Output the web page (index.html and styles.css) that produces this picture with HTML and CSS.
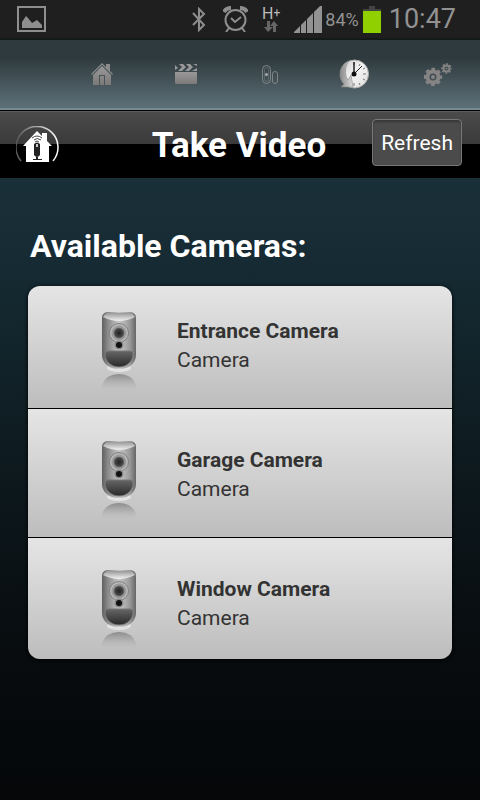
FILE: index.html
```html
<!DOCTYPE html>
<html lang="en">
    <head>
        <title>Take Video</title>
        <meta charset="UTF-8">
        <meta name="viewport" content="width=device-width, initial-scale=1">
        <link rel="stylesheet" href="styles.css">
    </head>
    <body>
        <!-- shared gradients and the camera drawing -->
        <svg class="defs" aria-hidden="true">
            <defs>
                <linearGradient id="body-metal">
                    <stop offset="0" stop-color="#606060"/>
                    <stop offset=".18" stop-color="#8c8c8c"/>
                    <stop offset=".5" stop-color="#c8c8c8"/>
                    <stop offset=".82" stop-color="#999"/>
                    <stop offset="1" stop-color="#666"/>
                </linearGradient>
                <linearGradient id="shine" x2="0" y2="1">
                    <stop offset="0" stop-color="#999"/>
                    <stop offset="1" stop-color="#f2f2f2"/>
                </linearGradient>
                <linearGradient id="sensor" x2="0" y2="1">
                    <stop offset="0" stop-color="#666"/>
                    <stop offset="1" stop-color="#292929"/>
                </linearGradient>
                <linearGradient id="mirror" x2="0" y2="1">
                    <stop offset="0" stop-color="#777" stop-opacity=".75"/>
                    <stop offset="1" stop-color="#aaa" stop-opacity="0"/>
                </linearGradient>
                <radialGradient id="lens">
                    <stop offset="0" stop-color="#222"/>
                    <stop offset=".7" stop-color="#444"/>
                    <stop offset="1" stop-color="#777"/>
                </radialGradient>
                <linearGradient id="grey" x2="0" y2="1">
                    <stop offset="0" stop-color="#999"/>
                    <stop offset="1" stop-color="#7c7978"/>
                </linearGradient>
                <linearGradient id="clock-face" x2="1" y2="1">
                    <stop offset="0" stop-color="#ccc"/>
                    <stop offset=".5" stop-color="#f4f4f4"/>
                    <stop offset="1" stop-color="#ddd"/>
                </linearGradient>
                <linearGradient id="clock-arrow">
                    <stop offset="0" stop-color="#888"/>
                    <stop offset="1" stop-color="#ddd"/>
                </linearGradient>
                <linearGradient id="ring">
                    <stop offset="0" stop-color="#555"/>
                    <stop offset="1" stop-color="#fff"/>
                </linearGradient>
            </defs>
            <symbol id="camera" viewBox="0 0 34 78">
                <ellipse cx="17" cy="56" rx="12" ry="4" fill="#eee" opacity=".7"/>
                <path d="M5 0H29Q34 1 34 6V43C34 51 27 57 17 57S0 51 0 43V6Q0 1 5 0Z" fill="url(#body-metal)"/>
                <path d="M5 1H29Q32 3 33 5Q25 9 17 9T1 5Q2 3 5 1Z" fill="url(#shine)"/>
                <circle cx="17" cy="21" r="9.5" fill="#b9b9b9" stroke="#808080"/>
                <circle cx="17" cy="21" r="7.5" fill="#9a9a9a"/>
                <circle cx="17" cy="21" r="5.5" fill="url(#lens)"/>
                <circle cx="17" cy="33" r="4.5" fill="#888"/>
                <circle cx="17" cy="33" r="3" fill="#111"/>
                <path d="M6 39H28Q31 39 31 42C31 49 25 55 17 55S3 49 3 42Q3 39 6 39Z" fill="url(#sensor)" stroke="#777"/>
                <path d="M0 78V73Q4 62 17 62T34 73V78Z" fill="url(#mirror)"/>
            </symbol>
        </svg>

        <div class="status">
            <svg class="picture" width="29" height="26" viewBox="0 0 29 26">
                <rect x="1" y="1" width="27" height="24" fill="none" stroke="#8e8e8e" stroke-width="2"/>
                <path d="M5 22V16L9 10L11 12L15 17L20 14L25 19V22Z" fill="#8e8e8e"/>
            </svg>
            <svg class="bluetooth" width="14" height="25" viewBox="0 0 14 25">
                <path d="M1 6L12 18L7 23V2L12 7L1 18" fill="none" stroke="#8e8e8e" stroke-width="2"/>
            </svg>
            <svg class="alarm" width="25" height="26" viewBox="0 0 25 26">
                <g fill="none" stroke="#8e8e8e" stroke-width="2">
                    <circle cx="12.500" cy="14" r="10"/>
                    <path d="M8 12L12 16L18 11M6 22L3 26M19 22L22 26"/>
                    <path d="M1 6Q3 2 8 2M24 6Q22 2 17 2" stroke-width="4"/>
                </g>
            </svg>
            <div class="network">
                <span class="mode">H<sup>+</sup></span>
                <svg width="14" height="11" viewBox="0 0 14 11">
                    <path d="M3 0H6V6H9L4 11L0 6H3ZM9 11V5H6L10 0L14 5H12V11Z" fill="#666"/>
                </svg>
            </div>
            <svg class="signal" width="28" height="27" viewBox="0 0 28 27">
                <path d="M0 27V26L6 20V27ZM7 27V19L12 14V27ZM13 27V13L19 7V27ZM20 27V6L26 0H28V27Z" fill="#929292"/>
            </svg>
            <span class="percent">84%</span>
            <svg class="battery" width="18" height="27" viewBox="0 0 18 27">
                <path d="M6 0H12V3H18V5H0V3H6Z" fill="#444"/>
                <path d="M0 5H18V27H0Z" fill="#90d000"/>
            </svg>
            <span class="time">10:47</span>
        </div>

        <nav class="tabs">
            <a href="#home" aria-label="Home">
                <svg width="22" height="22" viewBox="0 0 22 22">
                    <path d="M11 0L15 4V1H19V8L22 11L21 12L11 2L1 12L0 11Z" fill="#8b8b8b"/>
                    <path d="M11 3L20 12V22H2V12Z" fill="url(#grey)"/>
                    <path d="M8 22V12H14V22H13V13H9V22Z" fill="#465358"/>
                    <path d="M1 12L11 2L21 12" fill="none" stroke="#465358" stroke-width=".7"/>
                </svg>
            </a>
            <a href="#video" aria-label="Video">
                <svg width="22" height="20" viewBox="0 0 22 20">
                    <path d="M0 8H22V19L21 20H1L0 19Z" fill="url(#grey)"/>
                    <path d="M0 1L3 4L0 6ZM4 0H8L11 3L7 7H3L7 3ZM11 0H15L18 3L14 7H10L14 3ZM18 0H22V2L20 1ZM22 4V7H17Z" fill="#999"/>
                </svg>
            </a>
            <a href="#sensors" aria-label="Sensors">
                <svg width="16" height="19" viewBox="0 0 16 19">
                    <g fill="none" stroke="#7f8688">
                        <rect x=".5" y=".5" width="8" height="18" rx="4"/>
                        <rect x="2.500" y="2.500" width="4" height="14" rx="2" opacity=".45"/>
                        <rect x="10.500" y="6.500" width="5" height="12" rx="2.500"/>
                    </g>
                    <circle cx="4.500" cy="9.500" r="1.500" fill="#aaa"/>
                </svg>
            </a>
            <a href="#history" aria-label="History">
                <svg width="30" height="30" viewBox="0 0 30 30">
                    <circle cx="15.500" cy="15" r="14" fill="url(#clock-face)" stroke="#aaa"/>
                    <path d="M15 3V6M21 5L20 7M27 15H24M26 9L24 10M26 21L24 20M21 26L20 24M15 27V24" stroke="#777"/>
                    <path d="M10 2C-1 6-1 20 5 25L2 28H14L12 16L9 21C5 15 6 7 10 2Z" fill="url(#clock-arrow)" stroke="#888" stroke-width=".6"/>
                    <path d="M15 15V3" stroke="#222" stroke-width="1.500"/>
                    <path d="M13 17L23 7" stroke="#222"/>
                    <circle cx="15" cy="15" r="2.500" fill="#111"/>
                </svg>
            </a>
            <a href="#settings" aria-label="Settings">
                <svg width="28" height="23" viewBox="0 0 28 23">
                    <g fill="none" stroke="#858383">
                        <circle cx="9" cy="14" r="5.500" stroke-width="4"/>
                        <circle cx="9" cy="14" r="8" stroke-width="2.400" stroke-dasharray="3.700 2.583" stroke-dashoffset="1.850"/>
                        <circle cx="22.500" cy="5.500" r="3" stroke-width="2"/>
                        <circle cx="22.500" cy="5.500" r="4.500" stroke-width="1.600" stroke-dasharray="2 1.534" stroke-dashoffset="1"/>
                    </g>
                    <circle cx="9" cy="14" r="2" fill="#858383"/>
                    <circle cx="22.500" cy="5.500" r="1" fill="#858383"/>
                </svg>
            </a>
        </nav>

        <header class="bar">
            <a class="logo" href="#home" aria-label="Main page">
                <svg width="44" height="36" viewBox="0 0 44 36">
                    <path d="M5 35A21 21 0 1 1 37 35" fill="none" stroke="url(#ring)" stroke-width="1.500"/>
                    <path d="M21 5L26 10V7H31V15L36 20H33V36H10V20H7Z" fill="#fff"/>
                    <path d="M16 12Q21 8 26 12M18 14Q21 11 25 14M19 16Q21 14 23 16" fill="none" stroke="#444"/>
                    <path d="M18 18Q21 15 24 18V29Q21 33 18 29ZM20 31H22V33H26V34H17V33H20Z" fill="#222"/>
                    <path d="M21 18V21" stroke="#fff" stroke-width="1.500"/>
                </svg>
            </a>
            <h1>Take Video</h1>
            <button class="refresh" type="button">Refresh</button>
        </header>

        <main>
            <h2>Available Cameras:</h2>
            <ul class="cameras">
                <li>
                    <a href="#entrance">
                        <svg class="device" width="34" height="78"><use href="#camera"/></svg>
                        <span class="info"><strong>Entrance Camera</strong><span>Camera</span></span>
                    </a>
                </li>
                <li>
                    <a href="#garage">
                        <svg class="device" width="34" height="78"><use href="#camera"/></svg>
                        <span class="info"><strong>Garage Camera</strong><span>Camera</span></span>
                    </a>
                </li>
                <li>
                    <a href="#window">
                        <svg class="device" width="34" height="78"><use href="#camera"/></svg>
                        <span class="info"><strong>Window Camera</strong><span>Camera</span></span>
                    </a>
                </li>
            </ul>
        </main>
    </body>
</html>
```

FILE: styles.css
```css
* {
    box-sizing: border-box;
}

html {
    min-height: 100%;
    background: #05080a;
}

body {
    margin: 0;
    min-height: 100vh;
    font-family: Roboto, sans-serif;
    background: linear-gradient(#1a3039 178px, #142830 300px, #0c171b 500px, #080c0f 650px, #050709 100%);
}

a {
    color: inherit;
    text-decoration: none;
}

svg {
    display: block;
    flex: none;
}

.defs {
    position: absolute;
    width: 0;
    height: 0;
}

/* status bar */
.status {
    display: flex;
    align-items: center;
    height: 40px;
    padding: 0 24px 0 17px;
    color: #929292;
    background: #1f1f1f;
    border-bottom: 2px solid #131819;
}

.bluetooth {
    margin-left: auto;
}

.alarm {
    margin-left: 17px;
}

.network {
    display: flex;
    flex-direction: column;
    align-items: center;
    margin: 0 14px;
}

.mode {
    display: flex;
    font-size: 16px;
    line-height: 14px;
    color: #bbb;
}

.mode sup {
    font-size: 12px;
    line-height: 12px;
}

.percent {
    margin: 0 4px 0 3px;
    font-size: 18px;
}

.time {
    margin-left: 8px;
    font-size: 27px;
}

/* tab icons */
.tabs {
    display: grid;
    grid-template-columns: repeat(5, 1fr);
    height: 70px;
    padding-left: 12.5%;
    background: linear-gradient(#2f3b40, #2e393d 25%, #5a6d74 95%);
    border-bottom: 2px solid #788b91;
}

.tabs a {
    display: flex;
    align-items: center;
    justify-content: center;
}

/* title bar */
.bar {
    display: grid;
    grid-template-columns: 1fr auto 1fr;
    align-items: start;
    height: 68px;
    padding: 0 18px 0 16px;
    color: #fff;
    background: linear-gradient(#4b4b4b, #3a3a3a 50%, #000 50%);
    border-top: 1px solid #000;
    box-shadow: inset 0 1px #5c5c5c;
}

.logo {
    margin-top: 15px;
}

h1 {
    margin: 15px 0 0;
    font-size: 35px;
    line-height: 40px;
}

.refresh {
    justify-self: end;
    height: 47px;
    margin-top: 8px;
    padding: 0 8px;
    font: 21px Roboto, sans-serif;
    color: #fff;
    background: #4b4b4b;
    border: 1px solid #777;
    border-radius: 4px;
    box-shadow: inset 0 2px 2px #383838;
}

/* camera list */
main {
    padding: 48px 28px;
}

h2 {
    margin: 0 2px 20px;
    font-size: 32px;
    line-height: 40px;
    color: #fff;
}

.cameras {
    margin: 0;
    padding: 0;
    list-style: none;
    color: #333;
    border-radius: 12px;
    overflow: hidden;
    box-shadow: 0 1px 4px #000;
}

.cameras li {
    background: linear-gradient(#e5e5e5, #bdbdbd);
}

.cameras li + li {
    border-top: 1px solid #000;
}

.cameras a {
    display: flex;
    align-items: center;
    gap: 41px;
    padding: 32px 16px 18px 74px;
}

/* end rows are a little shorter */
.cameras li:first-child a {
    padding-top: 26px;
}

.cameras li:last-child a {
    padding-bottom: 11px;
}

.info {
    display: flex;
    flex-direction: column;
    padding-bottom: 10px;
    font-size: 21px;
    line-height: 29px;
}
```
